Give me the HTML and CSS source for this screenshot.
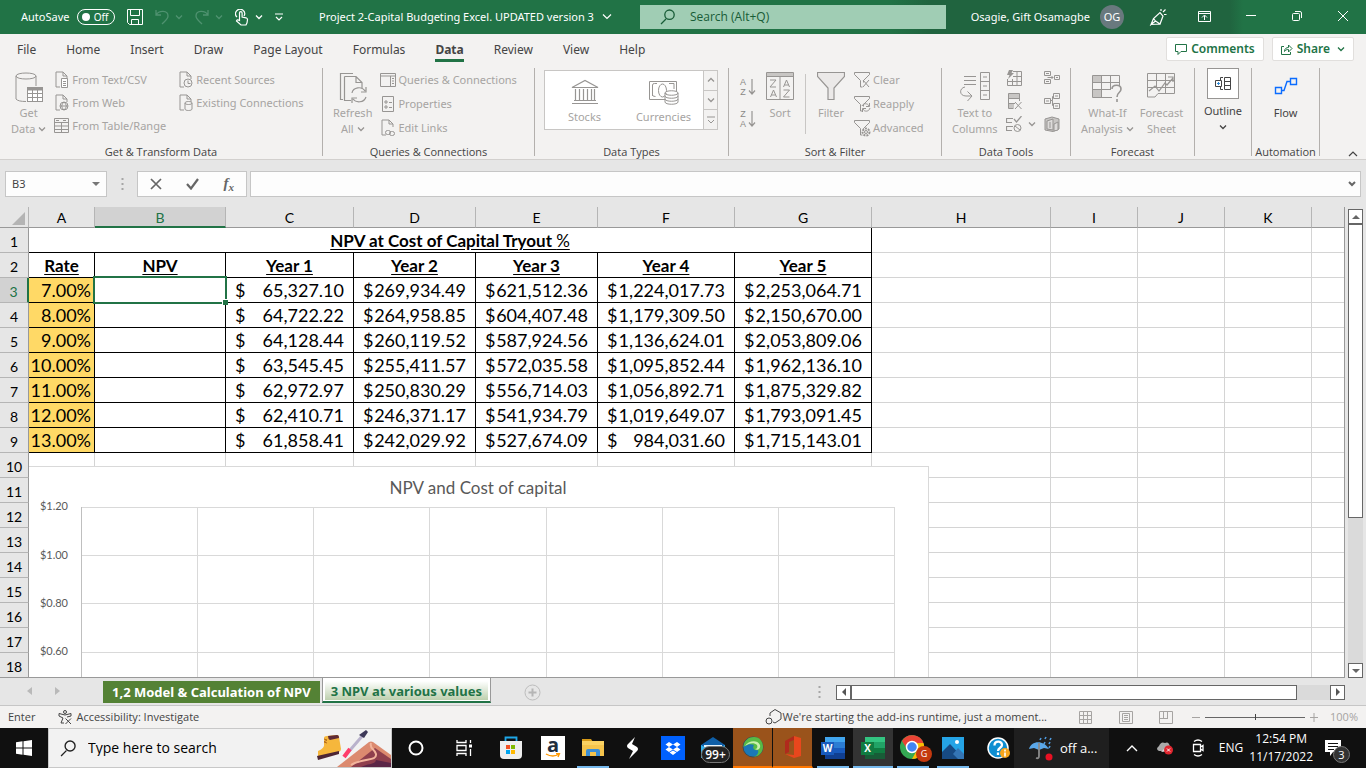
FILE: index.html
```html
<!DOCTYPE html>
<html lang="en">
<head>
    <meta charset="utf-8">
    <title>Project 2-Capital Budgeting Excel</title>
    <link rel="stylesheet" href="styles.css">
</head>

<body>

<svg class="defs" aria-hidden="true">
    <symbol id="caret" viewBox="0 0 8 8"><path d="M1 2.500l3 3 3-3" fill="none" stroke="currentColor" stroke-width="1.300"/></symbol>
    <symbol id="doc" viewBox="0 0 16 18"><path d="M9 1H2v15h4M9 1l4 4v3M9 1v4h4" fill="none" stroke="currentColor"/></symbol>
    <symbol id="funnel" viewBox="0 0 18 18"><path d="M1.500 1.500h15v2l-6 6v2M1.500 1.500v2l6 6v6.500h2" fill="none" stroke="currentColor"/></symbol>
    <symbol id="lens" viewBox="0 0 16 16"><path d="M1 15l5-5M9.500 1a4.700 4.700 0 1 1 0 9.400a4.700 4.700 0 1 1 0-9.400" fill="none" stroke="currentColor" stroke-width="1.300"/></symbol>
</svg>

<header class="titlebar">
    <div class="quick">
        <label class="autosave">AutoSave <input type="checkbox"><span class="switch">Off</span></label>
        <button aria-label="Save"><svg width="16" height="16"><path d="M.5.5h15v15h-13l-2-2zM3.500.500v6h9v-6M4.500 15.500v-5h7v5" fill="none" stroke="currentColor"/></svg></button>
        <button class="dim split" aria-label="Undo"><svg width="14" height="16"><path d="M1 1v5h5M1 6c3-5 12-5 12 1 0 3-3 5-6 8" fill="none" stroke="currentColor" stroke-width="1.300"/></svg><svg class="caret"><use href="#caret"/></svg></button>
        <button class="dim split" aria-label="Redo"><svg width="14" height="16"><path d="M13 1v5H8M13 6C10 1 1 1 1 7c0 3 3 5 6 8" fill="none" stroke="currentColor" stroke-width="1.300"/></svg><svg class="caret"><use href="#caret"/></svg></button>
        <button class="split" aria-label="Touch mode"><svg width="14" height="17"><path d="M2 8a4.500 4.500 0 1 1 7-1M4.500 11V4a1.300 1.300 0 0 1 2.600 0v4l4 .8q1.500.5 1.400 2l-.5 3-1 2.200H6L1.500 12q.5-2 3-.5z" fill="none" stroke="currentColor" stroke-width="1.200"/></svg><svg class="caret"><use href="#caret"/></svg></button>
        <button class="more" aria-label="Customize toolbar"><svg width="8" height="8"><path d="M0 1h8M1 4l3 3 3-3" fill="none" stroke="currentColor" stroke-width="1.200"/></svg></button>
    </div>
    <button class="doc-name">Project 2-Capital Budgeting Excel. UPDATED version 3 <svg width="10" height="8"><path d="M1 1.500l4 4 4-4" fill="none" stroke="currentColor" stroke-width="1.200"/></svg></button>
    <label class="app-search"><svg width="16" height="16"><use href="#lens"/></svg><input type="text" placeholder="Search (Alt+Q)" aria-label="Search"></label>
    <div class="account">
        <span>Osagie, Gift Osamagbe</span>
        <button class="avatar">OG</button>
        <button class="pen" aria-label="Draw"><svg width="18" height="18"><path d="M2 16.500l2.500-6L11 4.500l3 3.500-3 8-4.500-3zM2 16.500l9-.5M4.500 10.500l2 2.500M12 3V1M14 4l2.500-2.500M15 6.500h2.500" fill="none" stroke="currentColor" stroke-width="1.200"/></svg></button>
    </div>
    <div class="window-buttons">
        <button aria-label="Ribbon display options"><svg width="14" height="12"><path d="M.5.5h12v10H.5zM.5 2.500h12M6.500 9V4.500M4 6.500l2.500-2.500L9 6.500" fill="none" stroke="currentColor"/></svg></button>
        <button aria-label="Minimize"><svg width="10" height="10"><path d="M0 4.500h10" stroke="currentColor"/></svg></button>
        <button aria-label="Restore"><svg width="10" height="10"><rect x=".5" y="2.500" width="7" height="7" rx="1" fill="none" stroke="currentColor"/><path d="M3 .5h5q1.500 0 1.500 1.500v5" fill="none" stroke="currentColor"/></svg></button>
        <button aria-label="Close"><svg width="10" height="10"><path d="M0 0l10 10M10 0L0 10" stroke="currentColor"/></svg></button>
    </div>
</header>

<nav class="tabs">
    <button>File</button>
    <button>Home</button>
    <button>Insert</button>
    <button>Draw</button>
    <button>Page Layout</button>
    <button>Formulas</button>
    <button class="active">Data</button>
    <button>Review</button>
    <button>View</button>
    <button>Help</button>
    <div class="share-box">
        <button><svg width="12" height="11"><path d="M.5.5h11v7H6l-3 3v-3H.5z" fill="none" stroke="currentColor"/></svg>Comments</button>
        <button><svg width="12" height="12"><path d="M3 3.500H.5v8h9V9M3.500 8.500c0-3 2-4 4-4V2l3.500 3.500L7.500 9V6.500c-2 0-3 .5-4 2z" fill="none" stroke="currentColor"/></svg>Share<svg class="caret"><use href="#caret"/></svg></button>
    </div>
</nav>

<div class="ribbon">
    <section class="group get-data">
        <div class="tools">
            <button class="big">
                <svg width="28" height="32"><path d="M1 4v23q2 2.500 10 2.500M21 4v10M1 4c0-4 20-4 20 0s-20 4-20 0" fill="none" stroke="currentColor"/><rect x="12.500" y="15.500" width="15" height="14" fill="#fff" stroke="currentColor"/><path d="M12 17h16" stroke="currentColor" stroke-width="3"/><path d="M17.500 16v13M22.500 16v13M12 21.500h16M12 25.500h16" stroke="currentColor"/></svg>
                <span>Get<br>Data <svg class="caret"><use href="#caret"/></svg></span>
            </button>
            <div class="list">
                <button><svg width="16" height="18"><use href="#doc"/><path d="M7.500 7.500h6v9h-6zM9 10.500h3M9 12.500h3M9 14.500h3" fill="#fff" stroke="currentColor"/></svg>From Text/CSV</button>
                <button><svg width="16" height="18"><use href="#doc"/><circle cx="10" cy="12" r="4" fill="#f3f2f1" stroke="currentColor"/><path d="M6 12h8M10 8c-3 3-3 5 0 8c3-3 3-5 0-8" fill="none" stroke="currentColor"/></svg>From Web</button>
                <button><svg width="16" height="18"><path d="M.5 1.500h14v14H.5zM.5 5.500h14M.5 9h14M.5 12.500h14M7.500 5v10M2 3.500h3M9 3.500h3" fill="none" stroke="currentColor"/></svg>From Table/Range</button>
            </div>
            <div class="list sources">
                <button><svg width="16" height="18"><use href="#doc"/><circle cx="10" cy="12" r="4" fill="#f3f2f1" stroke="currentColor"/><path d="M10 9.500v3h2.500" fill="none" stroke="currentColor"/></svg>Recent Sources</button>
                <button><svg width="16" height="18"><use href="#doc"/><path d="M7 9v6c0 2 7 2 7 0V9c0-2-7-2-7 0s7 2 7 0" fill="#f3f2f1" stroke="currentColor"/></svg>Existing Connections</button>
            </div>
        </div>
        <h2>Get &amp; Transform Data</h2>
    </section>

    <section class="group queries">
        <div class="tools">
            <button class="big">
                <svg width="28" height="32"><path d="M4 27.500H1.500v-26H14M5.500 4.500H17l6 6v6M17 4.500v6h6M5.500 4.500v24H12" fill="none" stroke="currentColor" stroke-width="1.200"/><path d="M13 21c1-6 10-7 13-2M27 15v5h-5M27 25c-2 6-10 6-13 2M13 31v-5h5" fill="none" stroke="currentColor" stroke-width="1.200"/></svg>
                <span>Refresh<br>All <svg class="caret"><use href="#caret"/></svg></span>
            </button>
            <div class="list wide">
                <button><svg width="16" height="18"><path d="M.5 2.500h15v13H.5zM.5 5h15M10.500 5v10M12 7.500h2M12 10h2M12 12.500h2" fill="none" stroke="currentColor"/></svg>Queries &amp; Connections</button>
                <button><svg width="16" height="18"><path d="M2.500 1.500h11v15h-11zM5 6h2v2H5zM5 11h2v2H5zM9 7.500h3M9 12.500h3" fill="none" stroke="currentColor"/></svg>Properties</button>
                <button><svg width="16" height="18"><use href="#doc"/><rect x="5.500" y="11.500" width="5" height="4" rx="2" fill="#f3f2f1" stroke="currentColor"/><rect x="9.500" y="12.500" width="5" height="4" rx="2" fill="none" stroke="currentColor"/></svg>Edit Links</button>
            </div>
        </div>
        <h2>Queries &amp; Connections</h2>
    </section>

    <section class="group types">
        <div class="tools">
            <div class="gallery">
                <button><svg width="28" height="26"><path d="M1 8.500L14 1.500l13 7zM1 24.500h26M3 21.500h22M4.500 10v11M8.500 10v11M12.500 10v11M16.500 10v11M20.500 10v11M23.500 10v11" fill="none" stroke="currentColor" stroke-width="1.200"/></svg>Stocks</button>
                <button><svg width="32" height="26"><path d="M17 20.500H1.500v-18h27v10M4.500 17V6q0-1.500 2-1.500H9M21 4.500h5V10M4.500 16q0 1.500 3 1.500" fill="none" stroke="currentColor"/><ellipse cx="14.500" cy="11.500" rx="4" ry="6.500" fill="none" stroke="currentColor"/><path d="M17 14v9c0 3 13 3 13 0v-9M17 17c0 3 13 3 13 0M17 20c0 3 13 3 13 0M17 14c0-3 13-3 13 0s-13 3-13 0" fill="#fff" stroke="currentColor"/></svg>Currencies</button>
                <div class="scroller">
                    <button aria-label="Previous"><svg class="caret flip"><use href="#caret"/></svg></button>
                    <button aria-label="Next"><svg class="caret"><use href="#caret"/></svg></button>
                    <button aria-label="More"><svg width="8" height="8"><path d="M0 1h8M1 4l3 3 3-3" fill="none" stroke="currentColor"/></svg></button>
                </div>
            </div>
        </div>
        <h2>Data Types</h2>
    </section>

    <section class="group sort">
        <div class="tools">
            <div class="az">
                <button aria-label="Sort A to Z"><span>A<br>Z</span><svg width="8" height="18"><path d="M4 1v15M1 12.500l3 3.500 3-3.500" fill="none" stroke="currentColor" stroke-width="1.200"/></svg></button>
                <button aria-label="Sort Z to A"><span>Z<br>A</span><svg width="8" height="18"><path d="M4 1v15M1 12.500l3 3.500 3-3.500" fill="none" stroke="currentColor" stroke-width="1.200"/></svg></button>
            </div>
            <button class="big">
                <svg width="28" height="32"><path d="M.5.5h27v27H.5zM14 4v24" fill="none" stroke="currentColor"/><path d="M1 1h26v3H1z" fill="#c8c6c4"/><path d="M.5 4.500h27M4 8h6l-6 7h6M17.500 15l3-7 3 7M18.500 13h4M4.500 25l3-7 3 7M5.500 23h4M17.500 18h6l-6 7h6" fill="none" stroke="currentColor"/></svg>
                <span>Sort</span>
            </button>
            <hr>
            <button class="big filter">
                <svg width="28" height="32"><path d="M.5.500h27v4L17 16v11.500h-6V16L.5 4.500z" fill="#ebe9e8" stroke="currentColor" stroke-width="1.200"/></svg>
                <span>Filter</span>
            </button>
            <div class="list wide">
                <button><svg width="18" height="18"><use href="#funnel"/><path d="M10 9l6 7M16 9l-6 7" stroke="currentColor"/></svg>Clear</button>
                <button><svg width="18" height="18"><use href="#funnel"/><path d="M9 11c1-3 6-3 7 0M16.500 8v3.500H13M17 13c-1 4-6 4-7 1M9.500 17v-3.500H13" fill="none" stroke="currentColor"/></svg>Reapply</button>
                <button><svg width="18" height="18"><use href="#funnel"/><circle cx="13" cy="13" r="3.500" fill="none" stroke="currentColor" stroke-width="2" stroke-dasharray="2 1"/><circle cx="13" cy="13" r="1.500" fill="none" stroke="currentColor"/></svg>Advanced</button>
            </div>
        </div>
        <h2>Sort &amp; Filter</h2>
    </section>

    <section class="group data-tools">
        <div class="tools">
            <button class="big">
                <svg width="32" height="32"><path d="M5 4.500h12M5 8.500h12M5 12.500h12M6 15c-6 1-6 9 1 9h5M8.500 19.500L13 24l-4.500 5M21.500.500h9v27h-9zM21.500 9.500h9M21.500 18.500h9M24 5h4M24 14h4M24 23h4" fill="none" stroke="currentColor"/></svg>
                <span>Text to<br>Columns</span>
            </button>
            <div class="icons">
                <button aria-label="Flash Fill"><svg width="16" height="16"><path d="M7 1.500h8.500v14h-14V9M1.500 11.500h14M7 6.500h8.500M6.500 9v6M11 2v13" fill="none" stroke="currentColor"/><path d="M3 0h4L5.500 3H8L2 9l1.500-4H1z" fill="currentColor"/></svg></button>
                <button aria-label="Remove Duplicates"><svg width="16" height="16"><path d="M2.500.500h11v5h-11z" fill="#c8c6c4" stroke="currentColor"/><path d="M2.500 5v10.500h5M13.500 5v3M2.500 10.500H9" fill="none" stroke="currentColor"/><path d="M3 11h5v4H3z" fill="#c8c6c4"/><path d="M9 9l6.500 7M15.500 9L9 16" stroke="currentColor"/></svg></button>
                <button aria-label="Data Validation"><svg width="16" height="16"><path d="M7 2.500H.5v4H6M7 10.500H.5v4H6M8 3l2.500 3 5-6" fill="none" stroke="currentColor" stroke-width="1.200"/><circle cx="11.500" cy="12" r="3.500" fill="none" stroke="currentColor"/><path d="M9 10l5 4" stroke="currentColor"/></svg></button>
            </div>
            <svg class="caret"><use href="#caret"/></svg>
            <div class="icons">
                <button aria-label="Consolidate"><svg width="16" height="16"><path d="M.5 1.500h6v4h-6zM.5 9.500h6v4h-6zM10.500 5.500h5v4h-5zM2 3.500h3M2 11.500h3M12 7.500h2M3.500 7.500H9M7.500 6L9 7.500 7.500 9" fill="none" stroke="currentColor"/></svg></button>
                <button aria-label="Relationships"><svg width="16" height="16"><path d="M.5 5.500h6v5h-6zM9.500.500h6v5h-6zM9.500 10.500h6v5h-6zM6.500 7.500h2v-4h1M8.500 7.500v5h1M2 8h3M11 3h3M11 13h3" fill="none" stroke="currentColor"/></svg></button>
                <button aria-label="Manage Data Model"><svg width="16" height="16"><path d="M1 3l7-2 7 2v10l-6 2.500L1 14z" fill="#c8c6c4" stroke="currentColor"/><path d="M3 13V5l6-2v11zM10 8l4-2v8l-4 1zM6 6v6" fill="#dddbda" stroke="currentColor"/></svg></button>
            </div>
        </div>
        <h2>Data Tools</h2>
    </section>

    <section class="group forecast">
        <div class="tools">
            <button class="big">
                <svg width="32" height="32"><path d="M2 3h9v8H2zM2 18h9v7H2z" fill="#c8c6c4"/><path d="M21 25.500H1.500v-22h27V14M1.500 10.500h27M1.500 17.500H20M10.500 3v22M19.500 3v14" fill="none" stroke="currentColor"/><path d="M21 17c0-5 9-5 9 0 0 4-4 3-4 8M26 27v3" fill="none" stroke="currentColor" stroke-width="1.600"/></svg>
                <span>What-If<br>Analysis <svg class="caret"><use href="#caret"/></svg></span>
            </button>
            <button class="big">
                <svg width="28" height="32"><path d="M.5 25V1.500h27v20H11L8 25zM.5 8.500h27M.5 15.500h27M9.500 1v14M18.500 1v20" fill="none" stroke="currentColor"/><path d="M2 19l6-5 4 5 6-8 2 2 6-7M21 5h5v5" fill="none" stroke="currentColor" stroke-width="1.200"/></svg>
                <span>Forecast<br>Sheet</span>
            </button>
        </div>
        <h2>Forecast</h2>
    </section>

    <section class="group outline">
        <div class="tools">
            <button class="big enabled">
                <span class="frame"><svg width="16" height="16"><path d="M9.500 1.500h6v12h-6zM9.500 5.500h6M9.500 9.500h6M8 1.500H5.500V4M5.500 11v2.500H8" fill="none" stroke="#444"/><path d="M.5 4.500h6v6h-6z" fill="#fff" stroke="#444"/><path d="M3.500 6v3M2 7.500h3" stroke="#2b88d8"/></svg></span>
                <span>Outline<br><svg class="caret"><use href="#caret"/></svg></span>
            </button>
        </div>
    </section>

    <section class="group flow">
        <div class="tools">
            <button class="big enabled">
                <svg width="24" height="32"><path d="M1.500 15.500h6v6h-6zM16.500 6.500h6v6h-6zM7.500 18.500h2.500l3-9h3.500" fill="none" stroke="#0a6cff" stroke-width="1.400"/></svg>
                <span>Flow</span>
            </button>
        </div>
        <h2>Automation</h2>
    </section>

    <button class="collapse" aria-label="Collapse ribbon"><svg width="10" height="8"><path d="M1 6l4-4 4 4" fill="none" stroke="currentColor" stroke-width="1.200"/></svg></button>
</div>

<div class="formula-bar">
    <div class="name-box">
        <input type="text" value="B3" aria-label="Name box">
        <button aria-label="Open name list"><svg width="8" height="4"><path d="M0 0h8L4 4z" fill="#777"/></svg></button>
    </div>
    <svg class="grip" width="3" height="12"><path d="M1.500 0v2M1.500 5v2M1.500 10v2" stroke="#a6a6a6" stroke-width="2"/></svg>
    <div class="fx">
        <button aria-label="Cancel"><svg width="12" height="12"><path d="M1 1l10 10M11 1L1 11" stroke="currentColor" stroke-width="1.700"/></svg></button>
        <button aria-label="Enter"><svg width="13" height="12"><path d="M1 6l4 4.500L12 1" fill="none" stroke="currentColor" stroke-width="2.200"/></svg></button>
        <button aria-label="Insert function"><i>f</i><sub>x</sub></button>
    </div>
    <div class="formula">
        <input type="text" aria-label="Formula">
        <button aria-label="Expand formula bar"><svg width="8" height="8"><path d="M1 2l3 3 3-3" fill="none" stroke="#666" stroke-width="2"/></svg></button>
    </div>
</div>

<main class="workspace">
    <div class="sheet">
        <table>
            <colgroup>
                <col class="w-head"><col class="w-a"><col class="w-b"><col class="w-c"><col class="w-d"><col class="w-d"><col class="w-f"><col class="w-f"><col class="w-h"><col class="w-i"><col class="w-i"><col class="w-i"><col>
            </colgroup>
            <thead>
                <tr><th class="corner"><svg width="13" height="13"><path d="M13 0v13H0z" fill="#b4b4b4"/></svg></th><th>A</th><th class="picked">B</th><th>C</th><th>D</th><th>E</th><th>F</th><th>G</th><th>H</th><th>I</th><th>J</th><th>K</th><th></th></tr>
            </thead>
            <tbody>
                <tr class="filled"><th>1</th><td class="title" colspan="7">NPV at Cost of Capital Tryout <span>%</span></td><td></td><td></td><td></td><td></td><td></td></tr>
                <tr class="filled years"><th>2</th><td>Rate</td><td>NPV</td><td>Year 1</td><td>Year 2</td><td>Year 3</td><td>Year 4</td><td>Year 5</td><td></td><td></td><td></td><td></td><td></td></tr>
                <tr class="filled"><th class="picked">3</th><td class="rate">7.00%</td><td class="cursor"></td><td><div><span>$</span>65,327.10</div></td><td><div><span>$</span>269,934.49</div></td><td><div><span>$</span>621,512.36</div></td><td><div><span>$</span>1,224,017.73</div></td><td><div><span>$</span>2,253,064.71</div></td><td></td><td></td><td></td><td></td><td></td></tr>
                <tr class="filled"><th>4</th><td class="rate">8.00%</td><td></td><td><div><span>$</span>64,722.22</div></td><td><div><span>$</span>264,958.85</div></td><td><div><span>$</span>604,407.48</div></td><td><div><span>$</span>1,179,309.50</div></td><td><div><span>$</span>2,150,670.00</div></td><td></td><td></td><td></td><td></td><td></td></tr>
                <tr class="filled"><th>5</th><td class="rate">9.00%</td><td></td><td><div><span>$</span>64,128.44</div></td><td><div><span>$</span>260,119.52</div></td><td><div><span>$</span>587,924.56</div></td><td><div><span>$</span>1,136,624.01</div></td><td><div><span>$</span>2,053,809.06</div></td><td></td><td></td><td></td><td></td><td></td></tr>
                <tr class="filled"><th>6</th><td class="rate">10.00%</td><td></td><td><div><span>$</span>63,545.45</div></td><td><div><span>$</span>255,411.57</div></td><td><div><span>$</span>572,035.58</div></td><td><div><span>$</span>1,095,852.44</div></td><td><div><span>$</span>1,962,136.10</div></td><td></td><td></td><td></td><td></td><td></td></tr>
                <tr class="filled"><th>7</th><td class="rate">11.00%</td><td></td><td><div><span>$</span>62,972.97</div></td><td><div><span>$</span>250,830.29</div></td><td><div><span>$</span>556,714.03</div></td><td><div><span>$</span>1,056,892.71</div></td><td><div><span>$</span>1,875,329.82</div></td><td></td><td></td><td></td><td></td><td></td></tr>
                <tr class="filled"><th>8</th><td class="rate">12.00%</td><td></td><td><div><span>$</span>62,410.71</div></td><td><div><span>$</span>246,371.17</div></td><td><div><span>$</span>541,934.79</div></td><td><div><span>$</span>1,019,649.07</div></td><td><div><span>$</span>1,793,091.45</div></td><td></td><td></td><td></td><td></td><td></td></tr>
                <tr class="filled"><th>9</th><td class="rate">13.00%</td><td></td><td><div><span>$</span>61,858.41</div></td><td><div><span>$</span>242,029.92</div></td><td><div><span>$</span>527,674.09</div></td><td><div><span>$</span>984,031.60</div></td><td><div><span>$</span>1,715,143.01</div></td><td></td><td></td><td></td><td></td><td></td></tr>
                <tr><th>10</th><td></td><td></td><td></td><td></td><td></td><td></td><td></td><td></td><td></td><td></td><td></td><td></td></tr>
                <tr><th>11</th><td></td><td></td><td></td><td></td><td></td><td></td><td></td><td></td><td></td><td></td><td></td><td></td></tr>
                <tr><th>12</th><td></td><td></td><td></td><td></td><td></td><td></td><td></td><td></td><td></td><td></td><td></td><td></td></tr>
                <tr><th>13</th><td></td><td></td><td></td><td></td><td></td><td></td><td></td><td></td><td></td><td></td><td></td><td></td></tr>
                <tr><th>14</th><td></td><td></td><td></td><td></td><td></td><td></td><td></td><td></td><td></td><td></td><td></td><td></td></tr>
                <tr><th>15</th><td></td><td></td><td></td><td></td><td></td><td></td><td></td><td></td><td></td><td></td><td></td><td></td></tr>
                <tr><th>16</th><td></td><td></td><td></td><td></td><td></td><td></td><td></td><td></td><td></td><td></td><td></td><td></td></tr>
                <tr><th>17</th><td></td><td></td><td></td><td></td><td></td><td></td><td></td><td></td><td></td><td></td><td></td><td></td></tr>
                <tr><th>18</th><td></td><td></td><td></td><td></td><td></td><td></td><td></td><td></td><td></td><td></td><td></td><td></td></tr>
            </tbody>
        </table>
        <!-- floating chart, sits over rows 10 and down -->
        <svg class="chart" width="900" height="290">
            <rect x="-.5" y=".5" width="900" height="320" fill="#fff" stroke="#d9d9d9"/>
            <path d="M52 41.500h814M52 89.500h814M52 137.500h814M52 186.500h814M52 234.500h814M168.500 41v260M284.500 41v260M400.500 41v260M517.500 41v260M633.500 41v260M749.500 41v260M865.500 41v260" stroke="#d9d9d9"/>
            <path d="M52.500 41v260" stroke="#bfbfbf"/>
            <text class="chart-title" x="449" y="28">NPV and Cost of capital</text>
            <text x="39" y="44">$1.20</text>
            <text x="39" y="93">$1.00</text>
            <text x="39" y="141">$0.80</text>
            <text x="39" y="189">$0.60</text>
        </svg>
    </div>
    <div class="vscroll">
        <button aria-label="Scroll up"><svg width="8" height="4"><path d="M0 4h8L4 0z" fill="#666"/></svg></button>
        <div class="vthumb"></div>
        <button aria-label="Scroll down"><svg width="8" height="4"><path d="M0 0h8L4 4z" fill="#666"/></svg></button>
    </div>
</main>

<div class="sheet-bar">
    <div class="arrows">
        <button aria-label="Previous sheet"><svg width="5" height="8"><path d="M5 0v8L0 4z" fill="#b9b9b9"/></svg></button>
        <button aria-label="Next sheet"><svg width="5" height="8"><path d="M0 0v8l5-4z" fill="#b9b9b9"/></svg></button>
    </div>
    <button class="sheet-tab">1,2 Model &amp; Calculation of NPV</button>
    <button class="sheet-tab current"><span>3 NPV at various values</span></button>
    <button class="add" aria-label="New sheet"><svg width="17" height="17"><circle cx="8.500" cy="8.500" r="7.500" fill="none" stroke="#bdbdbd"/><path d="M8.500 4.500v8M4.500 8.500h8" stroke="#b5b5b5" stroke-width="2"/></svg></button>
    <svg class="grip" width="3" height="12"><path d="M1.500 0v2M1.500 5v2M1.500 10v2" stroke="#a6a6a6" stroke-width="2"/></svg>
    <div class="hscroll">
        <button aria-label="Scroll left"><svg width="4" height="8"><path d="M4 0v8L0 4z" fill="#555"/></svg></button>
        <div class="hthumb"></div>
        <button aria-label="Scroll right"><svg width="4" height="8"><path d="M0 0v8l4-4z" fill="#555"/></svg></button>
    </div>
</div>

<footer class="status">
    <span>Enter</span>
    <button class="a11y"><svg width="14" height="14"><circle cx="7" cy="2" r="1.500" fill="none" stroke="currentColor"/><path d="M6 13H3l2-5-4-2V3.500l6 1.500 6-1.500V6L9 7M7.500 8.500l5.500 5.500M13 8.500L7.500 14" fill="none" stroke="currentColor"/></svg>Accessibility: Investigate</button>
    <span class="addins"><svg width="17" height="16"><path d="M5 4l5-3.500L16 4v6l-6 4-2-1M5 7V4" fill="none" stroke="currentColor"/><circle cx="4" cy="12" r="3" fill="none" stroke="currentColor"/></svg>We're starting the add-ins runtime, just a moment...</span>
    <div class="views">
        <button aria-label="Normal view"><svg width="14" height="13"><path d="M.5.5h12v12H.5zM.5 4.500h12M.5 8.500h12M4.500 0v12M8.500 0v12" fill="none" stroke="currentColor"/></svg></button>
        <button aria-label="Page layout view"><svg width="14" height="13"><path d="M.5.5h13v12H.5zM3.500 2.500h7v8h-7zM5 4.500h4M5 6.500h4M5 8.500h4" fill="none" stroke="currentColor"/></svg></button>
        <button aria-label="Page break view"><svg width="14" height="13"><path d="M.5.5h13v12H.5zM4.500 0v7M8.500 0v7M0 7.500h9" fill="none" stroke="currentColor"/></svg></button>
    </div>
    <div class="zoom">
        <button aria-label="Zoom out"><svg width="8" height="9"><path d="M0 4.500h8" stroke="currentColor"/></svg></button>
        <input type="range" min="10" max="190" value="100" aria-label="Zoom">
        <button aria-label="Zoom in"><svg width="8" height="9"><path d="M0 4.500h8M4 0v9" stroke="currentColor"/></svg></button>
        <span>100%</span>
    </div>
</footer>

<div class="taskbar">
    <button class="start" aria-label="Start"><svg width="16" height="16"><path d="M0 2.200L6.500 1.300v6.200H0zM7.500 1.200L16 0v7.500H7.500zM0 8.500h6.500v6.200L0 13.800zM7.500 8.500H16V16l-8.500-1.200z" fill="#fff"/></svg></button>
    <label class="task-search">
        <svg width="17" height="17" viewBox="0 0 16 16"><use href="#lens"/></svg>
        <input type="text" placeholder="Type here to search" aria-label="Type here to search">
        <svg class="art" width="74" height="38">
            <path d="M1 22q7-3 6-7V9q0-2 3-2l10-1q2 0 2 2l2 12q0 2-2 3L1 28z" fill="#f6b73c"/><path d="M11 7l9-1q2 0 2 3l-9 2q-2-1-2-4z" fill="#5f2a35"/><path d="M7 10l3 1-3 2 3 1" fill="none" stroke="#b36a1e"/><path d="M0 27l22-5v3L1 31z" fill="#4d2635"/>
            <path d="M28 27L47 5" stroke="#b9b2cc" stroke-width="3"/><path d="M42 6l7-5 2 2-4 6z" fill="#3d3858"/><path d="M27 28l6-8" stroke="#ff3d6b" stroke-width="4"/>
            <path d="M20 38L52 13q2-1 4 0l18 13v12z" fill="#dc8a6f"/><path d="M34 38l24-19 16 11v8z" fill="#8f3f4d"/><path d="M44 38c8-4 14-2 15-7l15 3v4z" fill="#5b2647"/><path d="M34 36c12-8 26-3 25-11-1-5-7-5-5-11" fill="none" stroke="#f2b49c" stroke-width="2"/>
        </svg>
    </label>
    <button class="app side" aria-label="Cortana"><svg width="16" height="16"><circle cx="8" cy="8" r="6.500" fill="none" stroke="#fff" stroke-width="2"/></svg></button>
    <button class="app side" aria-label="Task view"><svg width="17" height="16"><path d="M1 0v2.500h9V0M1 16v-2.500h9V16M1 5.500h9v5H1zM14.500 0v3M14.500 9v7" fill="none" stroke="#fff" stroke-width="1.300"/><path d="M13 4.500h3v3h-3z" fill="#fff"/></svg></button>
    <button class="app store" aria-label="Store"><svg width="24" height="24"><path d="M6.500 6V1.500h11V6" fill="none" stroke="#1ea7e8" stroke-width="1.800"/><path d="M1 5h22v14q0 4-4 4H5q-4 0-4-4z" fill="#eee"/><path d="M7 9h4v4H7z" fill="#f25022"/><path d="M12 9h4v4h-4z" fill="#7fba00"/><path d="M7 14h4v4H7z" fill="#00a4ef"/><path d="M12 14h4v4h-4z" fill="#ffb900"/></svg></button>
    <button class="app" aria-label="Amazon"><span class="tile amazon">a<svg width="16" height="5"><path d="M1 1q7 4 13 0M11 .500h3.500L13 4" fill="none" stroke="#f90" stroke-width="1.400"/></svg></span></button>
    <button class="app running" aria-label="File Explorer"><svg width="24" height="20"><path d="M1 1h9l2 3h-11z" fill="#d79a17"/><path d="M1 3h22v15H1z" fill="#fbd262"/><path d="M1 7h22v11H1z" fill="#f5c44c"/><path d="M5 18v-5q0-2 2-2h10q2 0 2 2v5h-4v-4H9v4z" fill="#3c8fd6"/></svg></button>
    <button class="app" aria-label="Shortcut app"><svg width="14" height="24"><path d="M9 1L2 8q-2 2 0 4l5 3-4 8 8-8q2-2 0-4L6 8z" fill="#fff"/></svg></button>
    <button class="app" aria-label="Dropbox"><svg width="24" height="24"><path d="M0 0h24v24H0z" fill="#0061fe"/><path d="M8 6l4 2.500L8 11 4.500 8.500zM16 6l3.500 2.500L16 11l-4-2.500zM8 11l4 2.500L8 16l-3.500-2.500zM16 11l3.500 2.500L16 16l-4-2.500zM12 14.500l3.500 2L12 19l-3.500-2.500z" fill="#fff"/></svg></button>
    <button class="app" aria-label="Mail"><svg width="24" height="22"><path d="M0 8l12-8 12 8v13H0z" fill="#0f5fa8"/><path d="M3 8h18v7H3z" fill="#e8f4fc"/><path d="M0 8l12 7 12-7v13H0z" fill="#32b3ee"/></svg><span class="badge pill">99+</span></button>
    <button class="app alert" aria-label="Webex"><svg width="22" height="22"><circle cx="11" cy="11" r="10" fill="#1b78b5" stroke="#3f4b52"/><path d="M1.500 11C2 4 7 1 12 1c6 0 9 5 9 10 0 6-5 10-10 10 4-1 6-4 5-7-4 1-6-2-4-5-4-2-8 0-10.500 2z" fill="#58bb45"/><path d="M3 10c3-5 12-7 15-1 1 4-3 6-5 4 2 0 3-2 2-4-3-3-8-2-12 1z" fill="#c9efae"/></svg></button>
    <button class="app alert" aria-label="Office"><svg width="20" height="22"><path d="M2 5l9-5v4L6 6v10l-4 2z" fill="#b02a1c"/><path d="M11 0l7 2v18l-7 2-9-4 9 1z" fill="#e8471d"/></svg></button>
    <button class="app running" aria-label="Word"><span class="office word"><b>W</b></span></button>
    <button class="app running front" aria-label="Excel"><span class="office excel-icon"><b>X</b></span></button>
    <button class="app running" aria-label="Chrome"><svg width="26" height="26"><circle cx="12" cy="12" r="12" fill="#34a853"/><path d="M2 6a12 12 0 0 1 21.500 2H12l-5 6z" fill="#ea4335"/><path d="M23.500 8A12 12 0 0 1 12 24l5-9-1-7z" fill="#fbbc04"/><circle cx="12" cy="12" r="5.500" fill="#4285f4" stroke="#fff" stroke-width="1.500"/></svg><span class="badge g">G</span></button>
    <button class="app running" aria-label="Photos"><svg width="22" height="22"><path d="M0 0h22v22H0z" fill="#25a4e6"/><circle cx="15" cy="5" r="2" fill="#fff"/><path d="M0 15l8-8 14 15H0z" fill="#174a83"/><path d="M11 17l5-6 6 6v5h-6z" fill="#3475b5"/></svg></button>
    <button class="app help" aria-label="Get help"><svg width="24" height="22"><circle cx="11" cy="11" r="10" fill="#0d8ed1" stroke="#fff" stroke-width="1.500"/><path d="M7.500 8.500c0-5 7.500-5 7.500-.5 0 3-4 2.500-4 6M11 15.500v2.500" fill="none" stroke="#fff" stroke-width="2.300"/><circle cx="18" cy="16" r="5" fill="#f7a51c"/><path d="M18 12.500v2M18 15.500v4" stroke="#fff" stroke-width="1.600"/></svg></button>
    <button class="weather"><svg width="26" height="25"><path d="M1 13C3 5 15 3 21 13l-5-1-5 2-5-2z" fill="#5aa7e8"/><path d="M11 7v13q0 3-3 2" fill="none" stroke="#8a8a8a" stroke-width="1.800"/><path d="M13 2l-1 2M18 1l-1 2M23 2l-1 2M17 6l-1 2M22 6l-1 2M22 10l-1 2" stroke="#4e9be0" stroke-width="1.600"/><circle cx="21" cy="21" r="3.500" fill="#e81123"/></svg>off a...</button>
    <div class="tray">
        <button aria-label="Hidden icons"><svg width="12" height="8"><path d="M1 7l5-5 5 5" fill="none" stroke="#fff" stroke-width="1.400"/></svg></button>
        <button aria-label="OneDrive"><svg width="18" height="14"><path d="M3 10q-4-2 0-5Q5 0 9 2q4-2 5 4v4z" fill="#aaa"/><path d="M5 11l6-6 3 5z" fill="#ddd"/><circle cx="12.500" cy="9" r="4.500" fill="#e0262f"/><path d="M11 7.500l3 3M14 7.500l-3 3" stroke="#fff"/></svg></button>
        <button aria-label="Meet now"><svg width="12" height="18"><path d="M1.500 5.500h7v7h-7zM8.500 8l2.500-1.500v5L8.500 10M2 2.500q4-3 8 0M2 15.500q4 3 8 0" fill="none" stroke="#fff" stroke-width="1.300"/></svg></button>
        <button>ENG</button>
        <button class="clock">12:54 PM<br>11/17/2022</button>
        <button class="notes" aria-label="Notifications"><svg width="17" height="16"><path d="M0 0h16v12H8l-3 4v-4H0z" fill="#fff"/><path d="M3 3.500h10M3 6.500h10M3 9.500h6" stroke="#111"/></svg><span class="badge count">3</span></button>
    </div>
</div>

</body>

</html>
```
FILE: styles.css
```css
* {
    box-sizing: border-box;
}

body {
    margin: 0;
    height: 100vh;
    display: flex;
    flex-direction: column;
    overflow: hidden;
    background: #e6e6e6;
    color: #444;
    font-family: "Noto Sans", "Open Sans", sans-serif;
    font-size: 12px;
    line-height: 16px;
}

button {
    border: 0;
    padding: 0;
    background: none;
    color: inherit;
    font: inherit;
    white-space: nowrap;
}

input {
    border: 0;
    padding: 0;
    min-width: 0;
    background: none;
    font: inherit;
    outline: none;
}

svg {
    display: block;
    flex: none;
}

.defs {
    position: absolute;
    width: 0;
    height: 0;
}

.caret {
    display: inline-block;
    width: 8px;
    height: 8px;
}

.flip {
    transform: rotate(180deg);
}

/* title bar */
.titlebar {
    height: 34px;
    flex: none;
    display: flex;
    align-items: center;
    color: #fff;
    background-color: #217346;
    background-image:
        radial-gradient(circle at 97% 30px, #217346 28px, transparent 29px),
        linear-gradient(90deg, transparent 65%, #20643f 68%, #20643f 90%, transparent 91%);
}

.quick {
    width: 319px;
    padding-left: 21px;
    display: flex;
    align-items: center;
    gap: 12px;
}

.autosave {
    display: flex;
    align-items: center;
    gap: 8px;
    font-size: 11px;
}

.autosave input {
    position: absolute;
    opacity: 0;
}

.switch {
    width: 38px;
    height: 16px;
    padding-right: 6px;
    border: 1px solid #fff;
    border-radius: 8px;
    display: flex;
    align-items: center;
    justify-content: space-between;
    font-size: 10px;
}

.switch::before {
    content: "";
    width: 8px;
    height: 8px;
    margin-left: 4px;
    border-radius: 50%;
    background: #fff;
}

.split {
    display: flex;
    align-items: center;
    gap: 6px;
}

.dim {
    color: #4f9270;
}

.doc-name {
    display: flex;
    align-items: center;
    gap: 8px;
    font-size: 11px;
}

.app-search {
    width: 306px;
    height: 24px;
    margin-left: 28px;
    padding-left: 20px;
    display: flex;
    align-items: center;
    gap: 14px;
    background: #a0cdb4;
    color: #185c37;
    font-family: "Open Sans", sans-serif;
}

.app-search input {
    flex: 1;
    color: inherit;
}

input::placeholder {
    color: inherit;
    opacity: 1;
}

.account {
    margin-left: auto;
    display: flex;
    align-items: center;
    gap: 10px;
    font-size: 11px;
}

.avatar {
    width: 24px;
    height: 24px;
    border-radius: 50%;
    background: #69797e;
}

.pen {
    margin: 0 15px;
}

.window-buttons {
    display: flex;
}

.window-buttons button {
    width: 46px;
    display: flex;
    justify-content: center;
}

/* ribbon tabs */
.tabs {
    height: 34px;
    flex: none;
    padding: 3px 12px 0 17px;
    display: flex;
    align-items: flex-start;
    gap: 30px;
    background: #f3f2f1;
}

.tabs > button {
    height: 25px;
    padding-top: 3px;
    border-bottom: 3px solid transparent;
}

.tabs > .active {
    border-color: #217346;
    font-weight: bold;
}

.share-box {
    margin-left: auto;
    display: flex;
    gap: 8px;
}

.share-box button {
    height: 24px;
    padding: 0 8px;
    display: flex;
    align-items: center;
    gap: 4px;
    border: 1px solid #e1dfdd;
    border-radius: 2px;
    background: #fff;
    color: #217346;
    font-weight: 600;
}

.share-box .caret {
    margin-left: 3px;
}

/* ribbon */
.ribbon {
    height: 92px;
    flex: none;
    display: flex;
    background: #f3f2f1;
    border-bottom: 1px solid #d2d0ce;
    color: #a6a4a2;
    font-size: 11px;
}

.group {
    height: 88px;
    border-right: 1px solid #b3b0ad;
    display: flex;
    flex-direction: column;
}

.group h2 {
    margin: 0;
    color: #444;
    font-family: "Open Sans", sans-serif;
    font-size: 11px;
    font-weight: normal;
    text-align: center;
    white-space: nowrap;
}

.tools {
    height: 76px;
    flex: none;
    display: flex;
    align-items: flex-start;
}

.get-data { width: 323px; }
.queries { width: 212px; }
.types { width: 194px; }
.sort { width: 213px; }
.data-tools { width: 129px; }
.forecast { width: 124px; }
.outline { width: 57px; }
.flow { width: 68px; }

.big {
    padding-top: 4px;
    display: flex;
    flex-direction: column;
    align-items: center;
    gap: 1px;
}

.ribbon svg {
    color: #979593;
}

.ribbon .enabled,
.ribbon .enabled .caret {
    color: #444;
}

.list {
    padding-left: 8px;
    display: flex;
    flex-direction: column;
}

.list button {
    height: 23px;
    display: flex;
    align-items: center;
    gap: 2px;
}

.list.wide button {
    height: 24px;
}

.list.sources {
    padding-left: 12px;
}

.get-data .tools { padding-left: 11px; }
.queries .tools { padding-left: 10px; }

.gallery {
    width: 174px;
    height: 60px;
    margin: 2px 0 0 9px;
    display: flex;
    border: 1px solid #c8c6c4;
    background: #fff;
}

.gallery > button {
    width: 79px;
    padding-top: 8px;
    display: flex;
    flex-direction: column;
    align-items: center;
    gap: 4px;
}

.scroller {
    flex: 1;
    display: flex;
    flex-direction: column;
    border-left: 1px solid #c8c6c4;
    background: #f3f2f1;
}

.scroller button {
    flex: 1;
    display: flex;
    align-items: center;
    justify-content: center;
}

.scroller button + button {
    border-top: 1px solid #c8c6c4;
}

.sort .tools {
    padding-left: 11px;
}

.az {
    padding: 9px 10px 0 0;
    display: flex;
    flex-direction: column;
    gap: 12px;
}

.az button {
    display: flex;
    align-items: center;
    gap: 2px;
    font-family: "Liberation Sans", sans-serif;
    font-size: 9px;
    line-height: 10px;
    color: #8a8886;
}

.sort hr {
    width: 1px;
    height: 60px;
    margin: 6px 11px 0;
    border: 0;
    background: #c8c6c4;
}

.data-tools .tools {
    padding-left: 10px;
}

.icons {
    padding: 2px 6px 0 8px;
    display: flex;
    flex-direction: column;
    gap: 7px;
}

.data-tools .tools > .caret {
    margin-top: 52px;
}

.forecast .tools {
    padding-left: 10px;
    gap: 6px;
}

.outline .tools,
.flow .tools {
    justify-content: center;
}

.outline .big {
    padding-top: 0;
    gap: 4px;
}

.frame {
    width: 32px;
    height: 31px;
    display: flex;
    align-items: center;
    justify-content: center;
    border: 1px solid #979593;
    background: #fff;
}

.collapse {
    margin: auto 8px 1px auto;
}

.ribbon .collapse svg {
    color: #444;
}

/* formula bar */
.formula-bar {
    height: 47px;
    flex: none;
    padding: 11px 5px 10px;
    display: flex;
    align-items: stretch;
}

.name-box,
.fx,
.formula {
    display: flex;
    align-items: center;
    border: 1px solid #c6c6c6;
    background: #fdfdfd;
}

.name-box {
    width: 102px;
    padding: 0 6px;
}

.name-box input {
    flex: 1;
    color: #444;
    font-size: 11px;
}

.formula-bar .grip {
    margin: auto 13px auto 14px;
}

.fx {
    width: 110px;
    justify-content: space-between;
    padding: 0 12px;
    color: #666;
}

.fx i {
    font: italic bold 15px "Liberation Serif", serif;
}

.fx sub {
    font: italic bold 11px "Liberation Serif", serif;
}

.formula {
    flex: 1;
    margin-left: 3px;
    padding-right: 4px;
}

.formula input {
    flex: 1;
}

/* worksheet */
.workspace {
    flex: 1;
    min-height: 0;
    display: flex;
}

.sheet {
    flex: 1;
    position: relative;
    overflow: hidden;
    border-right: 1px solid #999;
    border-bottom: 1px solid #999;
}

table {
    width: 100%;
    table-layout: fixed;
    border-collapse: separate;
    border-spacing: 0;
    color: #000;
    font-family: Lato, "Open Sans", sans-serif;
    font-size: 18px;
    line-height: 20px;
}

.w-head { width: 29px; }
.w-a { width: 66px; }
.w-b { width: 131px; }
.w-c { width: 128px; }
.w-d { width: 122px; }
.w-f { width: 137px; }
.w-h { width: 179px; }
.w-i { width: 87px; }

th,
td {
    height: 25px;
    padding: 0;
    border-right: 1px solid #d4d4d4;
    border-bottom: 1px solid #d4d4d4;
    white-space: nowrap;
}

th {
    border-color: #b5b5b5;
    background: #e6e6e6;
    font-size: 14px;
    font-weight: normal;
}

tbody th {
    padding-top: 3px;
    border-right-color: #999;
}

thead th {
    height: 21px;
    padding-top: 2px;
    border-bottom-color: #999;
    line-height: 16px;
}

thead th:last-child {
    border-right: 0;
}

.corner svg {
    margin: 1px 0 0 12px;
}

td {
    background: #fff;
}

tr td:last-child {
    border-right: 0;
}

.filled td:not(:nth-last-child(-n+5)) {
    border-color: #000;
}

.title,
.years td {
    padding-top: 2px;
    font-weight: bold;
    font-size: 17px;
    text-align: center;
    text-decoration: underline;
    text-underline-offset: 2px;
}

.title span {
    font-weight: normal;
}

.filled .rate {
    padding-right: 3px;
    background: #ffd966;
    text-align: right;
}

td div {
    padding: 0 9px;
    display: flex;
    justify-content: space-between;
}

.picked {
    background: #d2d2d2;
    color: #217346;
}

thead .picked {
    border-bottom: 2px solid #217346;
}

tbody .picked {
    border-right: 2px solid #217346;
}

.cursor {
    position: relative;
}

.cursor::before {
    content: "";
    position: absolute;
    inset: -2px;
    border: 2px solid #217346;
}

.cursor::after {
    content: "";
    position: absolute;
    right: -3px;
    bottom: -3px;
    width: 5px;
    height: 5px;
    border: 1px solid #fff;
    border-width: 1px 0 0 1px;
    background: #217346;
}

.chart {
    position: absolute;
    left: 29px;
    top: 259px;
    font-family: Lato, "Open Sans", sans-serif;
    font-size: 11px;
    fill: #595959;
    text-anchor: end;
}

.chart-title {
    font-size: 17px;
    text-anchor: middle;
}

.vscroll {
    width: 15px;
    margin: 2px 3px 0 3px;
    display: flex;
    flex-direction: column;
    background: #dadada;
}

.vscroll button,
.hscroll button {
    width: 15px;
    height: 15px;
    display: flex;
    align-items: center;
    justify-content: center;
    border: 1px solid #666;
    background: #fff;
}

.vthumb {
    height: 294px;
    margin-bottom: auto;
    border: 1px solid #666;
    background: #fff;
}

/* sheet tabs */
.sheet-bar {
    height: 28px;
    flex: none;
    padding: 0 21px 2px 27px;
    display: flex;
    align-items: center;
    border-bottom: 1px solid #c6c6c6;
}

.arrows {
    width: 76px;
    display: flex;
    gap: 23px;
}

.sheet-tab {
    height: 22px;
    padding: 0 9px;
    align-self: flex-end;
    background: #548235;
    color: #fff;
    font-size: 13px;
    font-weight: bold;
}

.sheet-tab.current {
    height: 25px;
    margin-left: 2px;
    padding: 3px 2px 1px;
    border: solid #999;
    border-width: 0 1px 0 1px;
    border-bottom: 2px solid #217346;
    background: #fff;
    color: #217346;
}

.sheet-tab span {
    height: 100%;
    padding: 0 6px;
    display: flex;
    align-items: center;
    background: linear-gradient(#fff, #bdd0ae);
}

.add {
    margin: 3px auto 0 33px;
}

.sheet-bar .grip {
    margin: 3px 15px 0 0;
}

.hscroll {
    width: 509px;
    margin-top: 3px;
    display: flex;
    background: #dadada;
}

.hthumb {
    width: 446px;
    margin-right: auto;
    border: 1px solid #666;
    background: #fff;
}

/* status bar */
.status {
    height: 22px;
    flex: none;
    padding: 0 8px;
    display: flex;
    align-items: center;
    background: #f3f2f1;
    font-family: "Open Sans", sans-serif;
    font-size: 11px;
}

.a11y {
    margin-left: 23px;
    display: flex;
    align-items: center;
    gap: 4px;
}

.addins {
    margin-left: auto;
    display: flex;
    align-items: center;
}

.views {
    margin: 0 19px 0 32px;
    display: flex;
    gap: 26px;
    color: #a6a4a2;
}

.zoom {
    display: flex;
    align-items: center;
    gap: 5px;
    color: #a6a4a2;
}

.zoom span {
    width: 30px;
    margin-left: 5px;
    text-align: right;
}

.zoom input {
    width: 100px;
    height: 12px;
    margin: 0;
    appearance: none;
    background: linear-gradient(#666, #666) center / 100% 1px no-repeat;
}

.zoom input::-webkit-slider-thumb {
    appearance: none;
    width: 1px;
    height: 6px;
    background: #444;
}

/* taskbar */
.taskbar {
    height: 40px;
    flex: none;
    display: flex;
    background: #101010;
    color: #fff;
    font-family: "Open Sans", sans-serif;
}

.start {
    width: 48px;
    padding-left: 16px;
}

.task-search {
    width: 344px;
    padding-left: 11px;
    display: flex;
    align-items: center;
    gap: 11px;
    border: 1px solid #c8c8c8;
    background: #f2f2f2;
    color: #222;
    font-size: 14px;
}

.task-search input {
    flex: 1;
}

.app {
    width: 40px;
    position: relative;
    display: flex;
    align-items: center;
    justify-content: center;
}

.side {
    width: 48px;
}

.store {
    width: 45px;
}

.running::after {
    content: "";
    position: absolute;
    left: 4px;
    right: 4px;
    bottom: 0;
    height: 2px;
    background: #76b9ed;
}

.front {
    background: #333;
}

.front::after {
    left: 0;
    right: 0;
}

.alert {
    background: #9a531b;
    border-right: 1px solid #101010;
    border-bottom: 2px solid #ff7700;
}

.tile {
    width: 24px;
    height: 24px;
}

.amazon {
    display: flex;
    flex-direction: column;
    align-items: center;
    background: #fff;
    color: #222f3e;
    font-size: 20px;
    font-weight: bold;
    line-height: 17px;
}

.office {
    width: 24px;
    height: 22px;
    padding: 5px 10px 5px 0;
    border-left: 4px solid #101010;
}

.office b {
    width: 13px;
    height: 13px;
    margin-left: -4px;
    display: block;
    font-size: 10px;
    line-height: 13px;
}

.word {
    background: linear-gradient(#41a5ee 25%, #2b7cd3 25% 50%, #185abd 50% 75%, #103f91 75%);
}

.word b {
    background: #185abd;
}

.excel-icon {
    border-color: #333;
    background: linear-gradient(#33c481 25%, #21a366 25% 50%, #107c41 50% 75%, #185c37 75%);
}

.excel-icon b {
    background: #107c41;
}

.badge {
    position: absolute;
    border-radius: 9px;
    text-align: center;
    line-height: 16px;
}

.pill {
    left: 8px;
    bottom: 5px;
    width: 29px;
    border: 1px solid #777;
    background: #222;
    font-weight: 600;
    line-height: 15px;
}

.g {
    right: 1px;
    bottom: 6px;
    width: 16px;
    background: #c4390f;
    font-size: 9px;
}

.help {
    width: 41px;
    padding-left: 10px;
}

.weather {
    width: 95px;
    padding-left: 14px;
    display: flex;
    align-items: center;
    gap: 6px;
    background: #1f1f1f;
    font-size: 13px;
}

.tray {
    margin-left: auto;
    padding-right: 24px;
    display: flex;
    align-items: center;
    gap: 15px;
}

.tray > button:nth-child(-n+2) {
    margin-right: 3px;
}

.tray .clock {
    margin: 0 -3px 0 -9px;
    line-height: 18px;
}

.notes {
    position: relative;
}

.count {
    right: -8px;
    bottom: -7px;
    width: 17px;
    border: 1px solid #777;
    background: #333;
    font-size: 11px;
    line-height: 15px;
}
```
